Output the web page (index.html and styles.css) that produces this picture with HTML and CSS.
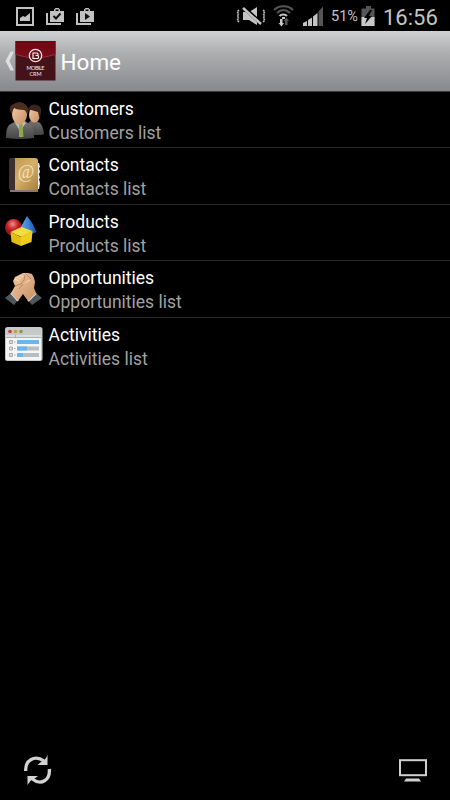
FILE: index.html
```html
<!DOCTYPE html>
<html lang="en">
<head>
<meta charset="utf-8">
<title>Home</title>
<link rel="stylesheet" href="styles.css">
</head>
<body>
<svg width="0" height="0" class="defs" aria-hidden="true">
  <defs>
    <linearGradient id="gold" x1="0" y1="0" x2="1" y2="1"><stop offset="0" stop-color="#bd9250"/><stop offset=".5" stop-color="#d6b06a"/><stop offset="1" stop-color="#a87d3c"/></linearGradient>
    <linearGradient id="skin" x1="0" y1="0" x2="1" y2="1"><stop offset="0" stop-color="#f1cba5"/><stop offset="1" stop-color="#c98d63"/></linearGradient>
    <linearGradient id="suit" x1="0" y1="0" x2="0" y2="1"><stop offset="0" stop-color="#777"/><stop offset="1" stop-color="#444"/></linearGradient>
    <radialGradient id="red" cx=".45" cy=".3"><stop offset="0" stop-color="#ee8d8d"/><stop offset=".6" stop-color="#c9262b"/><stop offset="1" stop-color="#9c1016"/></radialGradient>
    <linearGradient id="blue"><stop offset="0" stop-color="#72b1f2"/><stop offset=".55" stop-color="#3d82da"/><stop offset="1" stop-color="#1b4c9f"/></linearGradient>
    <linearGradient id="wine" x1="0" y1="0" x2="0" y2="1"><stop offset="0" stop-color="#6c0812"/><stop offset="1" stop-color="#7c0e1a"/></linearGradient>
  </defs>
</svg>
<header class="status">
  <svg class="status-left" width="110" height="31" viewBox="0 0 110 31">
    <path fill="#c2c2c2" fill-rule="evenodd" d="M16 7h18v19H16zM18 9v15h14V9z"/>
    <path fill="#c2c2c2" d="M20 21v-3l3-2 2 1 5-4v8z"/>
    <g id="bag"><path fill="#c2c2c2" fill-rule="evenodd" d="M50 11h4V9.500L55.500 8h3L60 9.500V11h4v11H50zM55.500 11h3V9.500h-3z"/><path fill="none" stroke="#c2c2c2" stroke-width="2" d="M47 13v11h14"/></g>
    <path fill="none" stroke="#111" stroke-width="2" d="M53.500 16l2.500 2.500 4.500-5"/>
    <use href="#bag" x="30"/><path d="M85 13v7l5-3.500z" fill="#111"/>
  </svg>
  <svg width="94" height="31" viewBox="233 0 94 31">
    <path fill="#c4c4c4" d="M243 12h6l8-5v18l-8-5h-6z"/>
    <path stroke="#000" stroke-width="4" d="M243 7l19 17"/><path stroke="#c4c4c4" stroke-width="2.500" d="M243 8l18 16"/>
    <path fill="none" stroke="#b8b8b8" stroke-width="1.600" stroke-dasharray="2 1" d="M239 10l-2 2 2 2-2 2 2 2-2 2 2 2M263 10l2 2-2 2 2 2-2 2 2 2-2 2"/>
    <g fill="none"><path stroke="#555" stroke-width="2.200" d="M274 10c5-5 14-5 19 0M277 13c4-4 9-4 13 0"/><path stroke="#c4c4c4" stroke-width="2" d="M279.500 16c2-2 5.500-2 7.500 0"/></g>
    <path fill="#c8c8c8" d="M282 17h3v2h-3zM280 19h2.500v4h1.500l-2.500 3.500-3-3.500H280z"/><path fill="#555" d="M285 25v-4h-1.500l3-3.500 2.500 3.500h-1.500v4z"/>
    <path fill="#c4c4c4" d="M303 26v-3l4-2v5zM308 26v-6l4-2.500V26zM313 26V16.500l4.500-3.500V26z"/><path fill="#555" d="M318.500 26V11.500l4.500-5V26z"/>
  </svg>
  <span class="percent">51%</span>
  <svg class="battery" width="14" height="20" viewBox="0 0 14 20"><path fill="#555" d="M5 0h5v2.500h3.500V20H.5V2.500H5z"/><path fill="#c9c9c9" d="M.5 11h13v9H.5z"/><path d="M9 4l-6 8h3l-2 6 7-8H8l3-6z" fill="#000"/></svg>
  <time class="clock">16:56</time>
</header>
<nav class="titlebar">
  <svg width="56" height="42" viewBox="0 0 56 42">
    <path fill="#dedee0" d="M10.500 11.500h3.500l-4.500 9.500 4.500 9.500h-3.500L5.500 21z"/>
    <path fill="#451219" d="M15.500 1h40v39.500h-40z"/><path fill="url(#wine)" d="M15.500 1h40v13.500q-12 3.500-20 3.500t-20-3.500z"/>
    <path fill="none" stroke="#9b3941" stroke-width=".8" d="M16 14.500q12 3.500 19.500 3.500t19.500-3.500"/>
    <circle cx="35.500" cy="15.500" r="6.200" fill="#6c111a" stroke="#eee" stroke-width="1.300"/>
    <path fill="none" stroke="#fff" stroke-width="1.100" d="M33 12.500v6h4.500q1 0 1-1v-1q0-1-1-1H35.500M32.500 13h4.500q1 0 1 1v1.500"/>
    <text class="logo-text" x="35.500" y="30.300" textLength="18">MOBILE</text><text class="logo-text" x="35.500" y="36" textLength="12">CRM</text>
  </svg>
  <h1>Home</h1>
</nav>
<main>
  <a class="row"><svg class="icon" viewBox="0 -1 40 40">
    <path fill="url(#suit)" d="M24 33V22q3-5 7-4l5 3q3 3 4 11l-2 1z"/><ellipse cx="30.500" cy="12.500" rx="5.500" ry="8" fill="url(#skin)"/><path fill="#39261f" d="M24 8q2-7 9-5 5 1 4 8l-1.500 6-1.500-7-7-2z"/>
    <path fill="url(#suit)" d="M2 36q0-10 3-13l7-4h9l6 4q3 4 3 13-14 2-28 0z"/><path fill="#bbb" d="M11 21l5 8 6-8-3-2h-5z"/><path fill="#91a64a" d="M15 22h3.500l1 13H15z"/>
    <ellipse cx="15.500" cy="12.500" rx="7.500" ry="10" fill="url(#skin)"/><path fill="#4a2f20" d="M7.500 12Q4 5 8 3q8-6 14 0 4 4 1.500 9l-3-4q-10 0-11-3z"/>
  </svg><div class="copy"><h2>Customers</h2><p>Customers list</p></div></a>
  <a class="row"><svg class="icon" viewBox="0 0 40 40">
    <path fill="#eee" d="M33 6h2l1 4-1 1 1 4-1 2 1 4-1 1 1 4-1 6H33z"/><path fill="url(#gold)" d="M6 1h25q3 0 3 3v29H6z"/><path fill="#3e3031" d="M6 1h5v32H6l-1-2V3z"/><path stroke="#c6c0b5" stroke-width="1.300" d="M6 34h28"/>
    <text class="at" x="22" y="21">@</text>
  </svg><div class="copy"><h2>Contacts</h2><p>Contacts list</p></div></a>
  <a class="row"><svg class="icon" viewBox="0 0 40 40">
    <circle cx="9.500" cy="13.500" r="8.500" fill="url(#red)"/><path fill="url(#blue)" d="M23 2q6 7 9.500 16l-9.500 4-9-4z"/>
    <path fill="#f3dd3f" d="M6.500 18l11-5 11 4-11 6z"/><path fill="#e3bd10" d="M6.500 18l10.500 5v9l-9.500-4z"/><path fill="#f0cc20" d="M28.500 17l-1 11-10.500 4v-9z"/>
  </svg><div class="copy"><h2>Products</h2><p>Products list</p></div></a>
  <a class="row"><svg class="icon" viewBox="0 0 40 40">
    <path fill="#51575b" d="M1 28l6-5 7 7-4 5zM38 28l-6-5-8 7 4 5z"/><path stroke="#ddd" stroke-width="1.800" d="M7 23l7 8M32 23l-8 8"/>
    <path fill="url(#skin)" d="M7 23l4-7-2-5 2-4 4-2 4-2 5 0 4 1 2 4 1 4-1 6 2 5-8 8-5-7-5 7z"/><path fill="none" stroke="#b27d59" stroke-width=".8" d="M11 16l6-2 3-4 1-5M19 14l-4 5M22 4l5 5"/><path fill="none" stroke="#ffe3c4" stroke-width=".8" d="M11 9l4 2M13 7l4 2M16 5l3 2M21 13l5-3"/>
  </svg><div class="copy"><h2>Opportunities</h2><p>Opportunities list</p></div></a>
  <a class="row"><svg class="icon" viewBox="0 0 40 40">
    <rect x="1" y="0" width="37.500" height="34" rx="2.500" fill="#c7c9c9"/><path fill="#f5f5f5" d="M2 11h35v22H2z"/><path fill="#ddd" d="M2 8h35v2H2z"/><path stroke="#999" stroke-width=".6" d="M2 10.500h35M11.500 8v3"/>
    <circle cx="6" cy="4.500" r="1.800" fill="#c83d3b"/><circle cx="11.500" cy="4.500" r="1.800" fill="#d39b36"/><circle cx="17" cy="4.500" r="1.800" fill="#75a643"/>
    <path fill="#b8bdc0" d="M13 13h22v4H13zM13 19.500h22v4H13zM13 26h22v4H13z"/><path fill="#68b5ef" d="M13 13h22v4H13zM13 19.500h10v4H13zM13 26h6v4h-6z"/>
    <path fill="#ddd" stroke="#aaa" d="M5.500 13.500h3v3h-3zM5.500 20h3v3h-3zM5.500 26.500h3v3h-3z"/><path stroke="#aaa" d="M10 15h1.500M10 21.500h1.500M10 28h1.500"/>
  </svg><div class="copy"><h2>Activities</h2><p>Activities list</p></div></a>
</main>
<footer>
  <svg width="28" height="30" viewBox="0 0 28 30"><g fill="none" stroke="#d2d2d2" stroke-width="3.300"><path d="M1.700 16C1 5 11-.500 20 6"/><path d="M25.300 14c1 11-8 17-17 10"/></g><path fill="#d2d2d2" d="M23.500 0v10H13.500l4-3.500c2 .5 4-2 6-6.500zM3.500 30V21H14l-4 3c-2 0-4 2-6.500 6z"/></svg>
  <svg width="28" height="23" viewBox="0 0 28 23"><rect x="1" y="1.200" width="26" height="15" fill="none" stroke="#d0d0d0" stroke-width="2"/><path fill="#d0d0d0" d="M7 19.500h13l2 3H5z"/></svg>
</footer>
</body>
</html>
```
FILE: styles.css
```css
* { box-sizing: border-box; }
body { margin: 0; width: 450px; height: 800px; display: flex; flex-direction: column; overflow: hidden; background: #000; color: #fff; font-family: Roboto, sans-serif; }
svg { display: block; flex: none; }
.defs { position: absolute; }
.status { display: flex; height: 31px; flex: none; color: #c4c4c4; }
.status-left { margin-right: 123px; }
.percent { width: 34px; padding-left: 4px; font-size: 14.5px; line-height: 34px; }
.battery { margin-top: 6px; }
.clock { margin-left: 8px; font-size: 22px; line-height: 35px; }
.titlebar { display: flex; align-items: center; height: 61px; flex: none; background: linear-gradient(#d0d1d3, #aeafb1 35%, #88898c); border-bottom: 1px solid #3b3b3e; }
h1 { margin: 2px 0 0 4.5px; font-size: 22.5px; line-height: 28px; font-weight: 400; }
.logo-text { fill: #eee; font-size: 5.5px; text-anchor: middle; font-family: Lato, sans-serif; }
main { flex: 1; }
.row { display: flex; height: 56.6px; padding: 5px 4px 0; border-bottom: 1px solid #292929; }
.row:first-child { height: 56px; padding-top: 4.5px; }
.row:last-child { border-bottom: 0; }
.icon { width: 40px; height: 40px; margin-top: 4px; }
.copy { margin-left: 4.5px; }
h2, p { margin: 0; font-size: 17.5px; font-weight: 400; line-height: 24px; white-space: nowrap; }
p { color: #a2a2a2; }
.at { fill: #f1dfb7; font: 18px "Liberation Serif", serif; text-anchor: middle; }
footer { display: flex; justify-content: space-between; align-items: center; height: 60px; padding: 0 23px 0 24px; }
```
